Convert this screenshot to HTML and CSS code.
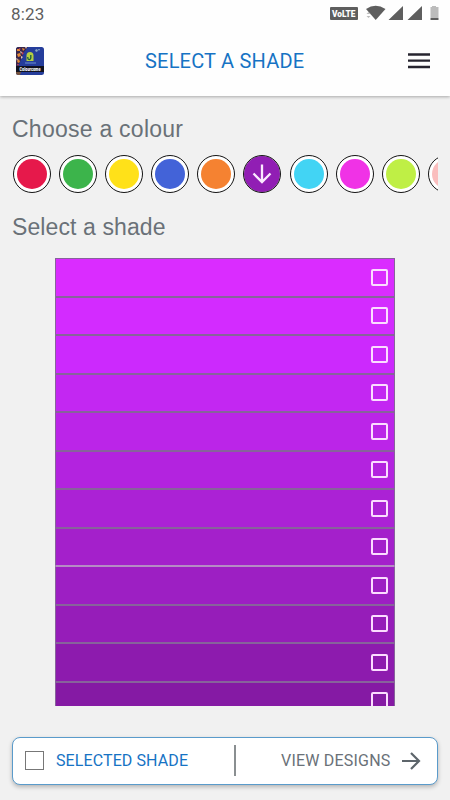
FILE: index.html
```html
<!DOCTYPE html>
<html lang="en">
<head>
<meta charset="utf-8">
<title>Select a shade</title>
<link rel="stylesheet" href="styles.css">
</head>
<body>
<header class="top">
  <div class="status">
    <span class="time">8:23</span>
    <svg class="signals" width="110" height="16" viewBox="0 0 110 16">
      <rect x="0" y="2" width="28" height="13" rx="1" fill="#5e5e5e"/>
      <text x="2" y="12" class="volte" textLength="23.5" lengthAdjust="spacingAndGlyphs">VoLTE</text>
      <path d="M36 4Q45.500-2.500 55.500 4L45.700 15Z" fill="#5e5e5e"/>
      <path d="M36.500 9l2-2 2 2zM36.500 11h4l-2 2z" fill="#bbb"/>
      <path d="M73 1v14H58.500zM92 1v14H77.500z" fill="#5e5e5e"/>
      <path d="M102 1h4v1h2.500v11h-8V2h1.500z" fill="#bcbcbc"/>
      <path d="M100.500 13h8v2h-8z" fill="#5e5e5e"/>
    </svg>
  </div>
  <div class="bar">
    <svg class="logo" width="28" height="28" viewBox="0 0 28 28">
      <defs><clipPath id="tile"><rect width="28" height="28" rx="2.500"/></clipPath></defs>
      <g clip-path="url(#tile)">
        <rect width="28" height="28" fill="#253d9b"/>
        <path d="M0 0h12L8 5 6 10 4 15 2 20H0z" fill="#38264c"/>
        <path d="M1 2h3v2H1zM6 1l3 1-2 2zM1 7l3-1 1 3-3 1zM1 14l2-2 1 3-2 1z" fill="#e58a35"/>
        <path d="M4 4l2 1-1 2zM9 0h2l-1 2zM0 11l2 1-1 2zM5 9l2 1-2 2z" fill="#e5c4b2"/>
        <path d="M3 1l2 1-2 1zM6 5l2 1-2 2zM1 17h2l-1 2z" fill="#c74258"/>
        <path d="M19 3l2-1 1 2-2 1zM22 2h2l-1 2z" fill="#8ba8c1"/>
        <path d="M10.500 14V8.500a3.500 3.500 0 0 1 7 0V14z" fill="#b5cf43"/>
        <path d="M14.800 8v3a1.500 1.500 0 0 1-3 0V10" fill="none" stroke="#175b43" stroke-width="1.300"/>
        <path d="M9 16h11" stroke="#6d92d1"/>
        <path d="M0 19h28v6H0z" fill="#10121f"/>
        <path d="M0 25h5l-1 3H0z" fill="#76533e"/>
        <text x="3.500" y="23.800" class="brand" textLength="21" lengthAdjust="spacingAndGlyphs">Colourcome</text>
      </g>
    </svg>
    <h1 class="title">SELECT A SHADE</h1>
    <svg class="menu" width="22" height="16" viewBox="0 0 22 16"><path d="M0 1.500h22M0 7.700h22M0 14h22" stroke="#26242f" stroke-width="2.300"/></svg>
  </div>
</header>
<main class="content">
  <h2 class="heading choose">Choose a colour</h2>
  <div class="colours">
    <span class="swatch red"></span>
    <span class="swatch green"></span>
    <span class="swatch yellow"></span>
    <span class="swatch blue"></span>
    <span class="swatch orange"></span>
    <span class="swatch chosen"><svg width="20" height="20" viewBox="0 0 20 20"><path d="M10 .5v17M1.500 9.500l8.500 8.500 8.500-8.500" fill="none" stroke="#fbeaff" stroke-width="2.300"/></svg></span>
    <span class="swatch cyan"></span>
    <span class="swatch magenta"></span>
    <span class="swatch lime"></span>
    <span class="swatch pink"></span>
  </div>
  <h2 class="heading select">Select a shade</h2>
  <div class="shades">
    <div class="shade s1"><i class="check"></i></div>
    <div class="shade s2"><i class="check"></i></div>
    <div class="shade s3"><i class="check"></i></div>
    <div class="shade s4"><i class="check"></i></div>
    <div class="shade s5"><i class="check"></i></div>
    <div class="shade s6"><i class="check"></i></div>
    <div class="shade s7"><i class="check"></i></div>
    <div class="shade s8"><i class="check"></i></div>
    <div class="shade s9"><i class="check"></i></div>
    <div class="shade s10"><i class="check"></i></div>
    <div class="shade s11"><i class="check"></i></div>
    <div class="shade s12"><i class="check"></i></div>
  </div>
</main>
<footer class="actions">
  <span class="box"></span>
  <span class="selected">SELECTED SHADE</span>
  <span class="divider"></span>
  <span class="view">VIEW DESIGNS</span>
  <svg class="arrow" width="19" height="18" viewBox="0 0 19 18"><path d="M0 9h17M9 1l8 8-8 8" fill="none" stroke="#5d656b" stroke-width="2.200"/></svg>
</footer>
</body>
</html>
```
FILE: styles.css
```css
* { box-sizing: border-box; }
body {
  margin: 0;
  height: 800px;
  overflow: hidden;
  display: flex;
  flex-direction: column;
  background: #f1f1f1;
  font-family: Roboto, sans-serif;
}
.top {
  height: 95.5px;
  flex: none;
  background: #fefefe;
  box-shadow: 0 1px 3px rgba(0, 0, 0, .3);
}
.status {
  height: 27px;
  display: flex;
  justify-content: space-between;
  padding: 5px 10px 0 11px;
}
.time { font-size: 17px; line-height: 18px; letter-spacing: .2px; color: #5f5f5f; }
.volte { font: 900 9px Roboto, sans-serif; fill: #fff; }
.brand { font: 900 4.500px Roboto, sans-serif; fill: #fff; }
.bar {
  height: 68px;
  display: flex;
  align-items: center;
  padding: 0 19px 0 15.500px;
}
.title {
  margin: 0 104px 0 101.500px;
  width: 159px;
  white-space: nowrap;
  font-size: 20px;
  font-weight: 400;
  line-height: 24px;
  letter-spacing: .2px;
  color: #1673c4;
}
.logo, .menu { flex: none; }
.content { padding: 0 12px; }
.heading {
  margin: 0;
  font-family: "Liberation Sans", Arial, sans-serif;
  font-size: 23px;
  font-weight: 400;
  line-height: 28px;
  color: #6a7178;
}
.choose { margin-top: 19px; letter-spacing: .25px; }
.select { margin-top: 20px; letter-spacing: .1px; }
.colours {
  display: flex;
  gap: 8.200px;
  margin-top: 12.500px;
  overflow: hidden;
  padding-left: .5px;
  width: 425.500px;
}
.swatch {
  flex: none;
  width: 38px;
  height: 38px;
  padding: 3px;
  border: 1px solid #151515;
  border-radius: 50%;
  background-color: #fff;
  background-clip: padding-box;
}
.swatch::before {
  content: "";
  display: block;
  width: 30px;
  height: 30px;
  border-radius: 50%;
  background: currentColor;
}
.red { color: #e6194b; }
.green { color: #3cb44b; }
.yellow { color: #ffe119; }
.blue { color: #4363d8; }
.orange { color: #f58231; }
.cyan { color: #42d4f4; }
.magenta { color: #f032e6; }
.lime { color: #bfef45; }
.pink { color: #fabebe; }
.chosen {
  display: flex;
  align-items: center;
  justify-content: center;
  background-color: #911eb4;
}
.chosen::before { display: none; }
.shades {
  width: 340px;
  height: 447.500px;
  margin: 17px auto 0;
  overflow: hidden;
}
.shade {
  height: 38.500px;
  display: flex;
  align-items: center;
  justify-content: flex-end;
  padding-right: 6px;
  border: 1px solid #87639b;
}
.check {
  width: 17px;
  height: 17px;
  border: 2px solid #fbdcff;
  border-radius: 2px;
}
.s1 { background: #da2cff; }
.s2 { background: #d32bff; }
.s3 { background: #cc29fd; }
.s4 { background: #c327f2; }
.s5 { background: #bb25e8; }
.s6 { background: #b323df; }
.s7 { background: #ab22d5; }
.s8 { background: #a420cb; }
.s9 { background: #9d1fc3; }
.s10 { background: #961db9; }
.s11 { background: #8d1bae; }
.s12 { background: #851aa4; }
.s8 { border-bottom-color: #b58bc4; }
.s9 { border-top-color: #b58bc4; }
.actions {
  height: 48px;
  flex: none;
  display: flex;
  align-items: center;
  margin: 31px 12px 0;
  padding: 0 16px 0 12px;
  background: #fff;
  border: 1px solid #5a9bcb;
  border-radius: 8px;
  box-shadow: 0 2px 4px rgba(0, 0, 0, .25);
  font-size: 16px;
  white-space: nowrap;
}
.box { width: 19px; height: 19px; border: 1px solid #777; }
.selected { width: 133px; margin-left: 12px; letter-spacing: .1px; color: #1673c4; }
.divider { width: 2px; height: 31px; margin-left: 45px; background: #8a8f91; }
.view { width: 110px; margin-left: 45px; letter-spacing: .2px; color: #6a7178; }
.arrow { margin-left: auto; }
```
